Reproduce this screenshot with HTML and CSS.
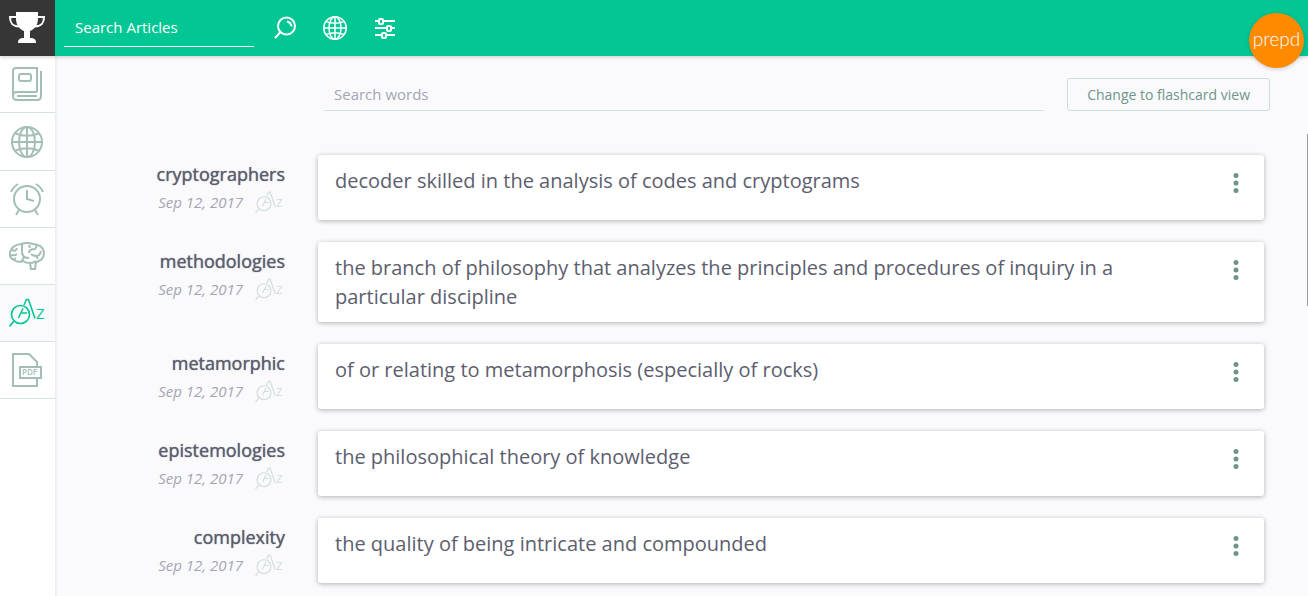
FILE: index.html
```
<!DOCTYPE html>
<html lang="en">
<head>
  <meta charset="UTF-8">
  <title>Vocabulary</title>
  <link rel="stylesheet" href="styles.css">
</head>
<body>
  <svg class="sprite" aria-hidden="true">
    <symbol id="globe" viewBox="0 0 32 32">
      <circle cx="16" cy="16" r="15"/>
      <ellipse cx="16" cy="16" rx="8" ry="15"/>
      <path d="M16 1v30M1 16h30M4.500 7.500Q16 12 27.500 7.500M4.500 24.500Q16 20 27.500 24.500"/>
    </symbol>
    <symbol id="az" viewBox="0 0 36 30">
      <g stroke-width="1.600">
        <circle cx="11.500" cy="16.500" r="9"/>
        <path d="M5 23l-4.500 5.500M15 7l2.500-5.500h2L26 20.500M9.500 20l4.500-9.500M12 15h6"/>
      </g>
      <text x="27" y="21">Z</text>
    </symbol>
    <symbol id="dots" viewBox="0 0 6 20">
      <circle cx="3" cy="3" r="2.500"/>
      <circle cx="3" cy="10.500" r="2.500"/>
      <circle cx="3" cy="18" r="2.500"/>
    </symbol>
  </svg>

  <header class="topbar">
    <a class="trophy" href="#" aria-label="Home">
      <svg width="38" height="32" viewBox="0 0 38 32">
        <path class="solid" d="M8 0h22v4l2 0v2h-2c0 7-3 11-8 13v7c4 0 6 1 6 5H10c0-4 2-5 6-5v-7C11 17 8 13 8 6z"/>
        <path d="M9 5H2c0 6 2 9 9 9.500M29 5h7c0 6-2 9-9 9.500"/>
      </svg>
    </a>
    <input class="article-search" type="text" placeholder="Search Articles" aria-label="Search Articles">
    <div class="tools">
      <button class="tool" type="button" aria-label="Search">
        <svg width="22" height="24" viewBox="0 0 22 24">
          <circle cx="12.500" cy="10" r="8.500"/>
          <path d="M6.500 16L1 22M13 5.500q4 1 4.500 5"/>
        </svg>
      </button>
      <button class="tool" type="button" aria-label="Language">
        <svg width="24" height="24"><use href="#globe"/></svg>
      </button>
      <button class="tool" type="button" aria-label="Filters">
        <svg width="22" height="22" viewBox="0 0 22 22">
          <path d="M1 4h4M9 4h12M1 11h12M17 11h4M1 18h7M12 18h9"/>
          <rect x="5" y="2" width="4" height="5" rx="1"/>
          <rect x="13" y="9" width="4" height="5" rx="1"/>
          <rect x="8" y="16" width="4" height="5" rx="1"/>
        </svg>
      </button>
    </div>
    <a class="badge" href="#">prepd</a>
  </header>

  <div class="layout">
    <nav class="sidebar">
      <a class="nav-item" href="#" aria-label="Articles">
        <svg width="30" height="34" viewBox="0 0 30 34">
          <path d="M25 25V1H4Q1 1 1 4v25q0 4 4 4h20q4 0 4-4V4M25 25H5q-4 0-4 4M5 29h20"/>
          <rect x="7" y="7" width="12" height="7" rx="2"/>
        </svg>
      </a>
      <a class="nav-item" href="#" aria-label="World">
        <svg width="32" height="32"><use href="#globe"/></svg>
      </a>
      <a class="nav-item" href="#" aria-label="History">
        <svg width="34" height="34" viewBox="0 0 34 34">
          <circle cx="17" cy="17" r="13"/>
          <path d="M17 8v9l7 2M9 28l-3 5M25 28l3 5M1 10q2-5 7-8M33 10q-2-5-7-8"/>
        </svg>
      </a>
      <a class="nav-item" href="#" aria-label="Quiz">
        <svg width="36" height="28" viewBox="0 0 36 28">
          <path d="M12 2Q18 0 24 2Q34 3 35 10Q35 17 30 19Q28 20 27 20L26 27H22L21 21Q17 21 14 19Q9 21 5 18Q0 16 1 10Q3 3 12 2z"/>
          <path d="M13 2v8q0 6 7 6M15 15l-2 4M3 8q4 2 5-2M2 13q4 1 6-1M4 18l3-2M20 3l1 3M27 2q1 4-1 5q-6 0-6 4M32 9q-1 5-5 5q-3 0-5-2M27 14l2 3M21 21q4 0 6-2"/>
        </svg>
      </a>
      <a class="nav-item active" href="#" aria-label="Vocabulary">
        <svg width="36" height="30"><use href="#az"/></svg>
      </a>
      <a class="nav-item" href="#" aria-label="PDF">
        <svg width="30" height="34" viewBox="0 0 30 34">
          <path d="M25 13v-4L17 1H1v32h24v-7"/>
          <rect x="8" y="14" width="21" height="11"/>
          <text class="pdf" x="10" y="22">PDF</text>
        </svg>
      </a>
    </nav>

    <main class="content">
      <div class="filter">
        <input class="word-search" type="text" placeholder="Search words" aria-label="Search words">
        <button class="view-toggle" type="button">Change to flashcard view</button>
      </div>

      <div class="words">
        <article class="entry">
          <div class="term">
            <h2>cryptographers</h2>
            <p class="date">Sep 12, 2017 <svg width="28" height="23"><use href="#az"/></svg></p>
          </div>
          <div class="card">
            <p>decoder skilled in the analysis of codes and cryptograms</p>
            <button class="more" type="button" aria-label="More"><svg width="6" height="21"><use href="#dots"/></svg></button>
          </div>
        </article>
        <article class="entry">
          <div class="term">
            <h2>methodologies</h2>
            <p class="date">Sep 12, 2017 <svg width="28" height="23"><use href="#az"/></svg></p>
          </div>
          <div class="card">
            <p>the branch of philosophy that analyzes the principles and procedures of inquiry in a particular discipline</p>
            <button class="more" type="button" aria-label="More"><svg width="6" height="21"><use href="#dots"/></svg></button>
          </div>
        </article>
        <article class="entry">
          <div class="term">
            <h2>metamorphic</h2>
            <p class="date">Sep 12, 2017 <svg width="28" height="23"><use href="#az"/></svg></p>
          </div>
          <div class="card">
            <p>of or relating to metamorphosis (especially of rocks)</p>
            <button class="more" type="button" aria-label="More"><svg width="6" height="21"><use href="#dots"/></svg></button>
          </div>
        </article>
        <article class="entry">
          <div class="term">
            <h2>epistemologies</h2>
            <p class="date">Sep 12, 2017 <svg width="28" height="23"><use href="#az"/></svg></p>
          </div>
          <div class="card">
            <p>the philosophical theory of knowledge</p>
            <button class="more" type="button" aria-label="More"><svg width="6" height="21"><use href="#dots"/></svg></button>
          </div>
        </article>
        <article class="entry">
          <div class="term">
            <h2>complexity</h2>
            <p class="date">Sep 12, 2017 <svg width="28" height="23"><use href="#az"/></svg></p>
          </div>
          <div class="card">
            <p>the quality of being intricate and compounded</p>
            <button class="more" type="button" aria-label="More"><svg width="6" height="21"><use href="#dots"/></svg></button>
          </div>
        </article>
      </div>
    </main>
  </div>
  <div class="scroll-thumb"></div>
</body>
</html>
```
FILE: styles.css
```
* {
  box-sizing: border-box;
}

body {
  margin: 0;
  min-height: 100vh;
  display: flex;
  flex-direction: column;
  font-family: "Open Sans", "Noto Sans", sans-serif;
  color: #5c5e6e;
  background: #fafafc;
}

h2,
p {
  margin: 0;
}

button,
input {
  font-family: inherit;
  background: none;
  border: none;
  padding: 0;
  outline: none;
}

button {
  cursor: pointer;
}

svg {
  display: block;
  fill: none;
  stroke: currentColor;
  stroke-width: 2;
}

svg text {
  font-family: "Open Sans", sans-serif;
  font-size: 15px;
  font-style: normal;
  fill: currentColor;
  stroke: none;
}

svg text.pdf {
  font-size: 8px;
  font-weight: 600;
}

.sprite {
  display: none;
}

/* top bar */
.topbar {
  position: relative;
  z-index: 2;
  display: flex;
  height: 56px;
  color: #fff;
  background: #02c794;
  box-shadow: 0 1px 4px rgba(0, 0, 0, 0.2);
}

.trophy {
  width: 55px;
  padding-right: 2px;
  display: flex;
  align-items: center;
  justify-content: center;
  color: #fff;
  background: #363636;
}

.solid {
  fill: currentColor;
  stroke: none;
}

.article-search {
  width: 190px;
  height: 39px;
  margin: 8px 0 0 9px;
  padding: 0 11px;
  font-size: 15px;
  color: #fff;
  border-bottom: 1px solid #fff;
}

.article-search::placeholder {
  color: #fff;
}

.tools {
  display: flex;
  align-items: center;
  gap: 26px;
  margin-left: 19px;
}

.tool {
  width: 24px;
  display: flex;
  justify-content: center;
  color: #fff;
}

.badge {
  position: absolute;
  top: 13px;
  right: 4px;
  width: 55px;
  height: 55px;
  border-radius: 50%;
  font-family: Lato, sans-serif;
  font-size: 19px;
  font-weight: 300;
  line-height: 52px;
  text-align: center;
  text-decoration: none;
  color: #fff;
  background: #ff8a00;
  box-shadow: 0 1px 4px rgba(0, 0, 0, 0.2);
}

/* left menu */
.layout {
  flex: 1;
  display: flex;
}

.sidebar {
  width: 55px;
  background: #fff;
  box-shadow: 0 0 4px rgba(0, 0, 0, 0.12);
}

.nav-item {
  height: 57px;
  padding-right: 1px;
  display: flex;
  align-items: center;
  justify-content: center;
  color: #a3bfb4;
  border-bottom: 1px solid #d5e4e2;
}

.nav-item:nth-child(2) {
  height: 58px;
}

.nav-item.active {
  color: #02c794;
  background: #fafafc;
}

/* word list */
.content {
  flex: 1;
  padding: 22px 44px 15px 33px;
}

.filter {
  display: flex;
  gap: 23px;
  margin: 0 -6px 44px 236px;
}

.word-search {
  flex: 1;
  height: 33px;
  padding: 0 10px;
  font-size: 15px;
  border-bottom: 1px solid #d5e1e1;
}

.word-search::placeholder {
  color: #a5a5b2;
}

.view-toggle {
  height: 33px;
  padding: 0 19px;
  font-size: 14px;
  color: #6f948a;
  border: 1px solid #cddddb;
  border-radius: 3px;
}

.words {
  display: flex;
  flex-direction: column;
  gap: 22px;
}

.entry {
  display: grid;
  grid-template-columns: 197px 1fr;
  gap: 33px;
}

.term {
  text-align: right;
  padding-top: 5px;
}

.term h2 {
  font-size: 18px;
  line-height: 28px;
  font-weight: 400;
  text-shadow: 0 0 1px currentColor;
}

.date {
  display: flex;
  align-items: center;
  justify-content: flex-end;
  gap: 12px;
  padding-right: 2px;
  font-size: 15px;
  line-height: 28px;
  font-style: italic;
  color: #a5a5b2;
}

.date svg {
  color: #d3dfdc;
}

.card {
  display: flex;
  align-items: flex-start;
  justify-content: space-between;
  min-height: 65px;
  padding: 11px 25px 11px 17px;
  background: #fff;
  border-radius: 3px;
  box-shadow: 0 1px 5px rgba(0, 0, 0, 0.3);
}

.card p {
  max-width: 800px;
  font-size: 20px;
  line-height: 29px;
}

.more {
  padding-top: 6px;
  color: #6f948a;
}

.more svg {
  fill: currentColor;
  stroke: none;
}

.scroll-thumb {
  position: absolute;
  top: 134px;
  right: 0;
  width: 1px;
  height: 172px;
  background: #9a9aa6;
}
```
